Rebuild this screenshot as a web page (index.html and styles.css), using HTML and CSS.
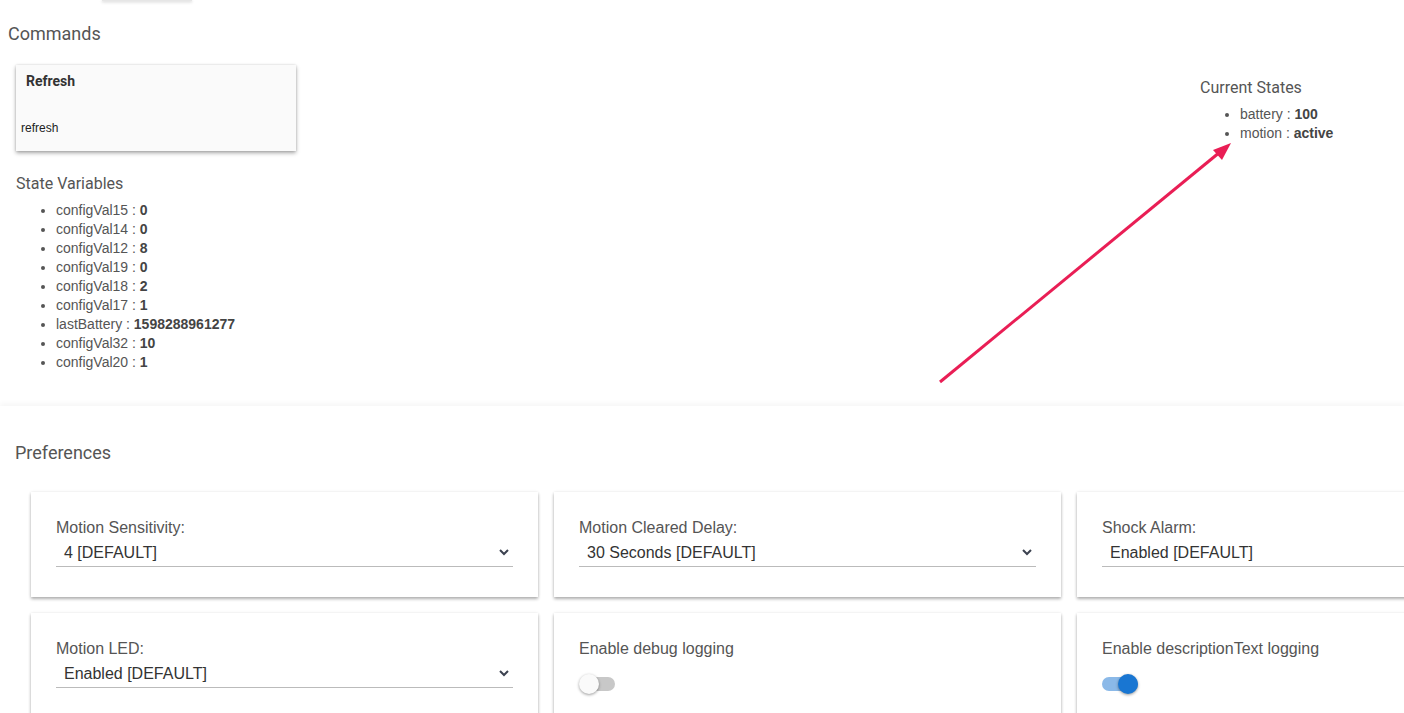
FILE: index.html
```html
<!DOCTYPE html>
<html lang="en">

<head>
    <meta charset="UTF-8">
    <meta name="viewport" content="width=device-width, initial-scale=1.0">
    <title>Device</title>
    <link rel="stylesheet" href="styles.css">
</head>

<body>
    <div class="top_stub"></div>
    <h2 class="section_title">Commands</h2>

    <div class="device_row">
        <div class="left_col">
            <div class="command_card">
                <div class="command_name">Refresh</div>
                <div class="command_method">refresh</div>
            </div>

            <h3 class="sub_title">State Variables</h3>
            <ul class="var_list">
                <li>configVal15 : <b>0</b></li>
                <li>configVal14 : <b>0</b></li>
                <li>configVal12 : <b>8</b></li>
                <li>configVal19 : <b>0</b></li>
                <li>configVal18 : <b>2</b></li>
                <li>configVal17 : <b>1</b></li>
                <li>lastBattery : <b>1598288961277</b></li>
                <li>configVal32 : <b>10</b></li>
                <li>configVal20 : <b>1</b></li>
            </ul>
        </div>

        <div class="right_col">
            <h3 class="sub_title states_title">Current States</h3>
            <ul class="var_list">
                <li>battery : <b>100</b></li>
                <li>motion : <b>active</b></li>
            </ul>
        </div>
    </div>

    <div class="preferences">
        <h2 class="pref_title">Preferences</h2>
        <div class="pref_grid">
            <div class="pref_card">
                <div class="pref_label">Motion Sensitivity:</div>
                <div class="pref_select">
                    <span>4 [DEFAULT]</span>
                    <svg class="chevron" width="10" height="7" viewBox="0 0 10 7"><polyline points="1,1 5,5 9,1" fill="none" stroke="#3c4250" stroke-width="2"/></svg>
                </div>
            </div>
            <div class="pref_card">
                <div class="pref_label">Motion Cleared Delay:</div>
                <div class="pref_select">
                    <span>30 Seconds [DEFAULT]</span>
                    <svg class="chevron" width="10" height="7" viewBox="0 0 10 7"><polyline points="1,1 5,5 9,1" fill="none" stroke="#3c4250" stroke-width="2"/></svg>
                </div>
            </div>
            <div class="pref_card">
                <div class="pref_label">Shock Alarm:</div>
                <div class="pref_select">
                    <span>Enabled [DEFAULT]</span>
                    <svg class="chevron" width="10" height="7" viewBox="0 0 10 7"><polyline points="1,1 5,5 9,1" fill="none" stroke="#3c4250" stroke-width="2"/></svg>
                </div>
            </div>
            <div class="pref_card">
                <div class="pref_label">Motion LED:</div>
                <div class="pref_select">
                    <span>Enabled [DEFAULT]</span>
                    <svg class="chevron" width="10" height="7" viewBox="0 0 10 7"><polyline points="1,1 5,5 9,1" fill="none" stroke="#3c4250" stroke-width="2"/></svg>
                </div>
            </div>
            <div class="pref_card">
                <div class="pref_label">Enable debug logging</div>
                <div class="switch">
                    <div class="switch_track"></div>
                    <div class="switch_knob"></div>
                </div>
            </div>
            <div class="pref_card">
                <div class="pref_label">Enable descriptionText logging</div>
                <div class="switch on">
                    <div class="switch_track"></div>
                    <div class="switch_knob"></div>
                </div>
            </div>
        </div>
    </div>

    <svg class="annotation" width="1404" height="713" viewBox="0 0 1404 713">
        <line x1="940" y1="382" x2="1220" y2="152" stroke="#e91e55" stroke-width="3"/>
        <polygon points="1231,143 1213,150 1222,160" fill="#e91e55"/>
    </svg>
</body>

</html>
```

FILE: styles.css
```css
*,
::before,
::after {
    box-sizing: border-box;
}

body {
    margin: 0;
    width: 1404px;
    height: 713px;
    overflow: hidden;
    background: #fff;
    position: relative;
    font-family: "Liberation Sans", Arial, sans-serif;
    color: #444;
}

.top_stub {
    margin-left: 102px;
    width: 90px;
    height: 1px;
    background: #e6e6e6;
    box-shadow: 0 1px 3px rgba(0, 0, 0, 0.3);
}

.section_title,
.pref_title {
    font-family: Roboto, "Liberation Sans", sans-serif;
    font-weight: 400;
    font-size: 18px;
    line-height: 22px;
    color: #555;
    margin: 0;
}

.section_title {
    margin: 22px 0 0 8px;
}

.device_row {
    display: flex;
    justify-content: space-between;
}

.left_col {
    padding-left: 16px;
}

.right_col {
    width: 204px;
}

.command_card {
    margin-top: 20px;
    width: 280px;
    height: 86px;
    background: #fafafa;
    box-shadow: 0 2px 4px rgba(0, 0, 0, 0.35), 0 0 2px rgba(0, 0, 0, 0.12);
    display: flex;
    flex-direction: column;
    justify-content: space-between;
    padding: 8px 0 16px 0;
}

.command_name {
    font-family: Roboto, "Liberation Sans", sans-serif;
    font-weight: bold;
    font-size: 14px;
    line-height: 16px;
    color: #333;
    padding-left: 10px;
}

.command_method {
    font-size: 12px;
    line-height: 14px;
    color: #222;
    padding-left: 5px;
}

.sub_title {
    font-family: Roboto, "Liberation Sans", sans-serif;
    font-weight: 400;
    font-size: 16px;
    line-height: 20px;
    color: #555;
    margin: 23px 0 0 0;
}

.states_title {
    margin-top: 33px;
}

.var_list {
    margin: 7px 0 0 0;
    padding-left: 40px;
    font-size: 14px;
    line-height: 19px;
    color: #555;
}

.var_list b {
    color: #444;
}

.preferences {
    margin-top: 34px;
    padding: 36px 0 0 15px;
    overflow: hidden;
    box-shadow: 0 -3px 5px rgba(0, 0, 0, 0.035);
}

.pref_grid {
    margin-top: 28px;
    padding: 0 0 4px 16px;
    display: grid;
    grid-template-columns: repeat(3, 507px);
    gap: 16px;
}

.pref_card {
    height: 105px;
    padding: 26px 25px 0 25px;
    background: #fff;
    box-shadow: 0 2px 3px rgba(0, 0, 0, 0.3), 0 0 3px rgba(0, 0, 0, 0.08);
}

.pref_label {
    font-size: 16px;
    line-height: 19px;
    color: #555;
}

.pref_select {
    height: 30px;
    display: flex;
    align-items: center;
    justify-content: space-between;
    padding: 2px 4px 0 8px;
    border-bottom: 1px solid #bbb;
    font-size: 16px;
    color: #333;
}

.switch {
    position: relative;
    width: 36px;
    height: 20px;
    margin-top: 16px;
}

.switch_track {
    position: absolute;
    left: 2px;
    right: 0;
    top: 3px;
    height: 14px;
    border-radius: 7px;
    background: #c8c8c8;
}

.switch_knob {
    position: absolute;
    left: 0;
    top: 0;
    width: 20px;
    height: 20px;
    border-radius: 50%;
    background: #fafafa;
    box-shadow: 0 1px 3px rgba(0, 0, 0, 0.4);
}

.switch.on .switch_track {
    left: 0;
    background: #8bb9e8;
}

.switch.on .switch_knob {
    left: 16px;
    background: #1976d2;
}

.annotation {
    position: absolute;
    left: 0;
    top: 0;
    pointer-events: none;
}
```
